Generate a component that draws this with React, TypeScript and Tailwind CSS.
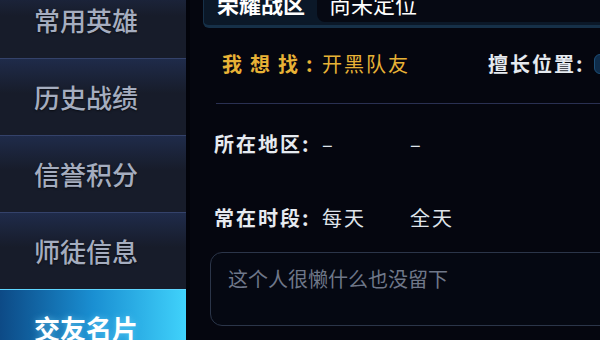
import React from 'react';

const menu = ['常用英雄', '历史战绩', '信誉积分', '师徒信息', '交友名片'];

export default function App() {
  return (
    <div
      className="w-[600px] h-[340px] overflow-hidden flex bg-[#05060f]"
      style={{ fontFamily: '"Noto Sans CJK SC", "Noto Sans", sans-serif' }}
    >
      {/* sidebar */}
      <div className="w-[186px] shrink-0 flex flex-col -mt-[19px] bg-[#171c2a]">
        {menu.map((m, i) => {
          const active = i === menu.length - 1;
          return (
            <div
              key={m}
              className={
                active
                  ? 'h-[77px] shrink-0 flex items-center justify-center border-t border-[#5fd6ff] bg-gradient-to-r from-[#0d4a86] via-[#1a8fd2] to-[#40d2fb]'
                  : 'h-[77px] shrink-0 flex items-center justify-center border-t border-[#34426a] bg-gradient-to-b from-[#1f2b4a] to-[#171c2a] to-45%'
              }
            >
              <span
                className={
                  active
                    ? 'text-[26px] leading-none font-bold text-white pr-[14px] [text-shadow:0_0_6px_rgba(120,220,255,0.6)]'
                    : 'text-[26px] leading-none font-medium text-[#a5adbf] pr-[14px] [text-shadow:0_1px_2px_rgba(0,0,0,0.6)]'
                }
              >
                {m}
              </span>
            </div>
          );
        })}
      </div>
      <div className="w-[4px] shrink-0 bg-[#02030a]" />

      {/* main */}
      <div className="flex-1 flex flex-col overflow-hidden">
        {/* top tab */}
        <div className="h-[28px] shrink-0 flex pl-[13px]">
          <div className="flex-1 flex bg-[#0b1828] border-l border-b-[3px] border-[#163048] rounded-bl-[6px]">
            <div className="w-[113px] shrink-0 flex items-start pl-[13px]">
              <span className="text-[22px] leading-none text-white font-semibold -mt-[8px]">荣耀战区</span>
            </div>
            <div className="flex-1 flex items-start pl-[12px] bg-[#060913] rounded-bl-[8px] h-[22px]">
              <span className="text-[22px] leading-none text-white -mt-[8px]">尚未定位</span>
            </div>
          </div>
        </div>

        {/* looking for */}
        <div className="h-[72px] shrink-0 flex items-center pl-[32px]">
          <span className="w-[100px] shrink-0 text-[20px] leading-none font-bold text-[#e8b236] tracking-[8px]">我想找:</span>
          <span className="w-[166px] shrink-0 text-[20px] leading-none text-[#e8b236] tracking-[2px]">开黑队友</span>
          <span className="w-[106px] shrink-0 text-[20px] leading-none font-bold text-[#e6eaf0] tracking-[2px]">擅长位置:</span>
          <div className="w-[40px] h-[20px] shrink-0 rounded-[6px] bg-[#0f2c4a] border border-[#1d4f78]" />
        </div>

        <div className="mt-[3px] ml-[26px] h-px shrink-0 bg-[#2a3052]" />

        {/* area */}
        <div className="h-[80px] shrink-0 flex items-center pl-[24px]">
          <span className="w-[108px] shrink-0 text-[20px] leading-none font-bold text-[#e6eaf0] tracking-[2px]">所在地区:</span>
          <span className="w-[88px] shrink-0 text-[20px] leading-none text-[#dfe3ea]">–</span>
          <span className="text-[20px] leading-none text-[#dfe3ea]">–</span>
        </div>

        {/* time */}
        <div className="h-[68px] shrink-0 flex items-center pl-[24px]">
          <span className="w-[108px] shrink-0 text-[20px] leading-none font-bold text-[#e6eaf0] tracking-[2px]">常在时段:</span>
          <span className="w-[88px] shrink-0 text-[20px] leading-none text-[#dfe3ea] tracking-[2px]">每天</span>
          <span className="text-[20px] leading-none text-[#dfe3ea] tracking-[2px]">全天</span>
        </div>

        {/* intro */}
        <div className="ml-[20px] -mr-[20px] h-[74px] shrink-0 rounded-[12px] border-[1.5px] border-[#2b3549] bg-[#050812] pl-[17px] pt-[15px]">
          <span className="text-[20px] leading-none text-[#6f7789]">这个人很懒什么也没留下</span>
        </div>
      </div>
    </div>
  );
}
